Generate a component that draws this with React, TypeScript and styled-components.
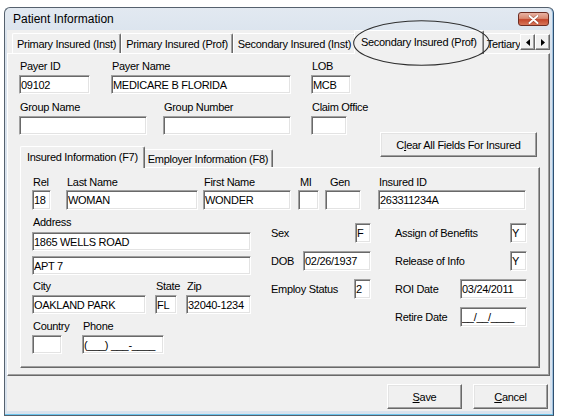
import React from "react";
import styled, { createGlobalStyle, css } from "styled-components";

const GlobalStyle = createGlobalStyle`
  html, body {
    margin: 0;
    padding: 0;
    background: #fff;
  }
  body {
    font-family: "Liberation Sans", Arial, sans-serif;
    font-size: 11px;
    letter-spacing: -0.3px;
    color: #000;
  }
  * {
    box-sizing: border-box;
  }
`;

const Window = styled.div`
  position: relative;
  margin: 7px 0 0 4px;
  width: 550px;
  height: 409px;
  display: flex;
  flex-direction: column;
  padding: 0 3px 4px 2px;
  background: linear-gradient(#e2e9f1, #d7e1ec 40px, #d9e3ee);
  border: 1px solid #55616e;
  border-right-color: #2f4f6f;
  border-radius: 6px 6px 0 0;
  box-shadow: inset 0 -1px 0 #6cc4ec, inset -1px 0 0 #9fc2e0;
`;

const TitleBar = styled.div`
  height: 22px;
  display: flex;
  align-items: center;
  justify-content: space-between;
  padding-left: 6px;
  font-size: 12px;
  letter-spacing: 0;
`;

const CloseButton = styled.div`
  align-self: flex-start;
  margin-top: 4px;
  margin-right: 1px;
  width: 31px;
  height: 14px;
  display: flex;
  align-items: center;
  justify-content: center;
  border: 1px solid #6d2d22;
  border-radius: 3px;
  background: linear-gradient(#e9b3a3, #d98a72 45%, #c4472c 55%, #d7765a);
`;

const Client = styled.div`
  flex: 1;
  display: flex;
  flex-direction: column;
  background: #f0f0f0;
`;

const TabRow = styled.div`
  display: flex;
  height: 24px;
  margin-bottom: -1px;
  position: relative;
  z-index: 1;
`;

const TabViewport = styled.div<{ $pad: number }>`
  flex: 1;
  display: flex;
  align-items: flex-start;
  overflow: hidden;
  padding-left: ${(p) => p.$pad}px;
`;

const Tab = styled.div<{ $active?: boolean; $h: number }>`
  flex: none;
  position: relative;
  display: flex;
  align-items: center;
  height: ${(p) => p.$h}px;
  margin-top: 3px;
  padding: 0 4px;
  background: #f0f0f0;
  border-top: 1px solid #fff;
  border-left: 1px solid #fff;
  border-right: 1px solid #696969;
  border-radius: 2px 2px 0 0;
  box-shadow: inset -1px 0 #a0a0a0;
  white-space: nowrap;

  ${(p) =>
    p.$active &&
    css`
      height: ${p.$h + 4}px;
      margin: 0 -2px;
      padding: 0 6px 2px;
      z-index: 2;
    `}
`;

const ArrowGroup = styled.div`
  display: flex;
  margin-top: 4px;
`;

const ArrowButton = styled.div`
  width: 15px;
  height: 16px;
  display: flex;
  align-items: center;
  justify-content: center;
  background: #f0f0f0;
  border: 1px solid;
  border-color: #fff #696969 #696969 #fff;
  box-shadow: inset -1px -1px #a0a0a0;
`;

const OuterPanel = styled.div`
  flex: none;
  height: 323px;
  padding: 6px 0 0 11px;
  border: 1px solid;
  border-color: #fff #696969 #696969 #fff;
  box-shadow: inset -1px -1px #a0a0a0;
`;

const FieldRow = styled.div<{ $mt?: number }>`
  display: flex;
  align-items: flex-end;
  margin-top: ${(p) => p.$mt ?? 0}px;
`;

const FieldGroup = styled.div<{ $w: number; $ml?: number }>`
  flex: none;
  display: flex;
  flex-direction: column;
  width: ${(p) => p.$w}px;
  margin-left: ${(p) => p.$ml ?? 0}px;
`;

const Label = styled.label<{ $indent?: number; $gap?: number }>`
  display: block;
  height: 13px;
  line-height: 13px;
  margin: 0 0 ${(p) => p.$gap ?? 2}px ${(p) => p.$indent ?? 1}px;
  white-space: nowrap;
`;

const TextBox = styled.input<{ $w?: number; $h?: number; $mt?: number }>`
  flex: none;
  display: block;
  width: ${(p) => (p.$w ? `${p.$w}px` : "100%")};
  height: ${(p) => p.$h ?? 19}px;
  margin: ${(p) => p.$mt ?? 0}px 0 0;
  padding: 0 1px;
  font: inherit;
  letter-spacing: inherit;
  color: #000;
  background: #fff;
  border: 1px solid;
  border-color: #a0a0a0 #fff #fff #a0a0a0;
  box-shadow: inset 1px 1px #696969, inset -1px -1px #e3e3e3;
  border-radius: 0;
  outline: none;
`;

const PushButton = styled.button<{ $w: number }>`
  flex: none;
  width: ${(p) => p.$w}px;
  height: 25px;
  padding: 0;
  font: inherit;
  letter-spacing: inherit;
  color: #000;
  background: #f0f0f0;
  border: 1px solid;
  border-color: #fff #696969 #696969 #fff;
  box-shadow: inset -1px -1px #a0a0a0, inset 1px 1px #e3e3e3;
  border-radius: 0;
`;

const InnerControl = styled.div`
  width: 520px;
  margin: -3px 0 0 1px;
`;

const InnerHeader = styled.div`
  height: 36px;
  display: flex;
  margin-bottom: -1px;
  position: relative;
  z-index: 1;
`;

const InnerTabs = styled.div`
  align-self: flex-end;
  height: 22px;
  display: flex;
  align-items: flex-start;
  padding-left: 2px;
`;

const ClearButton = styled(PushButton)`
  margin: 0 3px 0 auto;
`;

const InnerPanel = styled.div`
  height: 201px;
  padding: 8px 0 0 11px;
  border: 1px solid;
  border-color: #fff #696969 #696969 #fff;
  box-shadow: inset -1px -1px #a0a0a0;
`;

const LowerArea = styled.div`
  display: flex;
  margin-top: 6px;
`;

const AddressColumn = styled.div`
  width: 219px;
  display: flex;
  flex-direction: column;
`;

const DetailGrid = styled.div`
  display: grid;
  grid-template-columns: 100px 132px;
  grid-auto-rows: 20px;
  column-gap: 24px;
  row-gap: 8px;
  margin: 7px 0 0 20px;
`;

const InlineField = styled.div`
  display: flex;
  align-items: center;
  justify-content: space-between;
  white-space: nowrap;
`;

const Footer = styled.div`
  flex: 1;
  display: flex;
  justify-content: flex-end;
  align-items: flex-start;
  gap: 11px;
  padding: 8px 2px 0 0;
`;

const Callout = styled.svg`
  position: absolute;
  left: 348px;
  top: 12px;
  width: 137px;
  height: 46px;
  z-index: 5;
  pointer-events: none;
`;

const Box = ({ value, w, h, mt }: { value?: string; w?: number; h?: number; mt?: number }) => (
  <TextBox readOnly value={value ?? ""} $w={w} $h={h} $mt={mt} />
);

const Arrow = ({ dir }: { dir: "left" | "right" }) => (
  <svg width="4" height="7" viewBox="0 0 4 7">
    <path d={dir === "left" ? "M4 0 L0 3.5 L4 7 Z" : "M0 0 L4 3.5 L0 7 Z"} fill="#000" />
  </svg>
);

const outerTabs = [
  "Primary Insured (Inst)",
  "Primary Insured (Prof)",
  "Secondary Insured (Inst)",
  "Secondary Insured (Prof)",
  "Tertiary Insured (Inst)",
];

export default function App() {
  return (
    <>
      <GlobalStyle />
      <Window>
        <TitleBar>
          <span>Patient Information</span>
          <CloseButton>
            <svg width="11" height="9" viewBox="0 0 11 9">
              <path d="M1.5 1 L9.5 8 M9.5 1 L1.5 8" stroke="#5a1d12" strokeWidth="3" strokeLinecap="round" opacity="0.45" />
              <path d="M1.5 1 L9.5 8 M9.5 1 L1.5 8" stroke="#fff" strokeWidth="2" strokeLinecap="round" />
            </svg>
          </CloseButton>
        </TitleBar>

        <Client>
          <TabRow>
            <TabViewport $pad={5}>
              {outerTabs.map((t, i) => (
                <Tab key={t} $h={20} $active={i === 3}>
                  {t}
                </Tab>
              ))}
            </TabViewport>
            <ArrowGroup>
              <ArrowButton>
                <Arrow dir="left" />
              </ArrowButton>
              <ArrowButton>
                <Arrow dir="right" />
              </ArrowButton>
            </ArrowGroup>
          </TabRow>

          <OuterPanel>
            <FieldRow>
              <FieldGroup $w={71}>
                <Label>Payer ID</Label>
                <Box value="09102" />
              </FieldGroup>
              <FieldGroup $w={180} $ml={21}>
                <Label>Payer Name</Label>
                <Box value="MEDICARE B FLORIDA" />
              </FieldGroup>
              <FieldGroup $w={40} $ml={20}>
                <Label>LOB</Label>
                <Box value="MCB" />
              </FieldGroup>
            </FieldRow>

            <FieldRow $mt={7}>
              <FieldGroup $w={128}>
                <Label>Group Name</Label>
                <Box />
              </FieldGroup>
              <FieldGroup $w={128} $ml={16}>
                <Label>Group Number</Label>
                <Box />
              </FieldGroup>
              <FieldGroup $w={36} $ml={20}>
                <Label>Claim Office</Label>
                <Box />
              </FieldGroup>
            </FieldRow>

            <InnerControl>
              <InnerHeader>
                <InnerTabs>
                  <Tab $h={18} $active>
                    Insured Information (F7)
                  </Tab>
                  <Tab $h={18}>Employer Information (F8)</Tab>
                </InnerTabs>
                <ClearButton $w={157}>
                  C<u>l</u>ear All Fields For Insured
                </ClearButton>
              </InnerHeader>

              <InnerPanel>
                <FieldRow>
                  <FieldGroup $w={19}>
                    <Label $gap={1}>Rel</Label>
                    <Box value="18" h={20} />
                  </FieldGroup>
                  <FieldGroup $w={132} $ml={15}>
                    <Label $gap={1}>Last Name</Label>
                    <Box value="WOMAN" h={20} />
                  </FieldGroup>
                  <FieldGroup $w={88} $ml={5}>
                    <Label $gap={1}>First Name</Label>
                    <Box value="WONDER" h={20} />
                  </FieldGroup>
                  <FieldGroup $w={21} $ml={7}>
                    <Label $gap={1} $indent={2}>
                      MI
                    </Label>
                    <Box h={20} />
                  </FieldGroup>
                  <FieldGroup $w={36} $ml={6}>
                    <Label $gap={1} $indent={5}>
                      Gen
                    </Label>
                    <Box h={20} />
                  </FieldGroup>
                  <FieldGroup $w={148} $ml={17}>
                    <Label $gap={1}>Insured ID</Label>
                    <Box value="263311234A" h={20} />
                  </FieldGroup>
                </FieldRow>

                <LowerArea>
                  <AddressColumn>
                    <Label $gap={3}>Address</Label>
                    <Box value="1865 WELLS ROAD" />
                    <Box value="APT 7" mt={5} />
                    <FieldRow $mt={5}>
                      <FieldGroup $w={114}>
                        <Label>City</Label>
                        <Box value="OAKLAND PARK" />
                      </FieldGroup>
                      <FieldGroup $w={22} $ml={9}>
                        <Label>State</Label>
                        <Box value="FL" />
                      </FieldGroup>
                      <FieldGroup $w={65} $ml={9}>
                        <Label>Zip</Label>
                        <Box value="32040-1234" />
                      </FieldGroup>
                    </FieldRow>
                    <FieldRow $mt={6}>
                      <FieldGroup $w={30}>
                        <Label>Country</Label>
                        <Box />
                      </FieldGroup>
                      <FieldGroup $w={82} $ml={20}>
                        <Label>Phone</Label>
                        <Box value="(___) ___-____" />
                      </FieldGroup>
                    </FieldRow>
                  </AddressColumn>

                  <DetailGrid>
                    <InlineField>
                      <span>Sex</span>
                      <Box value="F" w={16} h={20} />
                    </InlineField>
                    <InlineField>
                      <span>Assign of Benefits</span>
                      <Box value="Y" w={17} h={20} />
                    </InlineField>
                    <InlineField>
                      <span>DOB</span>
                      <Box value="02/26/1937" w={68} h={20} />
                    </InlineField>
                    <InlineField>
                      <span>Release of Info</span>
                      <Box value="Y" w={17} h={20} />
                    </InlineField>
                    <InlineField>
                      <span>Employ Status</span>
                      <Box value="2" w={17} h={20} />
                    </InlineField>
                    <InlineField>
                      <span>ROI Date</span>
                      <Box value="03/24/2011" w={67} h={20} />
                    </InlineField>
                    <span />
                    <InlineField>
                      <span>Retire Date</span>
                      <Box value="__/__/____" w={67} h={20} />
                    </InlineField>
                  </DetailGrid>
                </LowerArea>
              </InnerPanel>
            </InnerControl>
          </OuterPanel>

          <Footer>
            <PushButton $w={75}>
              <u>S</u>ave
            </PushButton>
            <PushButton $w={75}>
              <u>C</u>ancel
            </PushButton>
          </Footer>
        </Client>

        <Callout viewBox="0 0 137 46">
          <ellipse cx="68.5" cy="23" rx="67.8" ry="22.3" fill="none" stroke="#2e2e2e" strokeWidth="1.1" />
        </Callout>
      </Window>
    </>
  );
}
